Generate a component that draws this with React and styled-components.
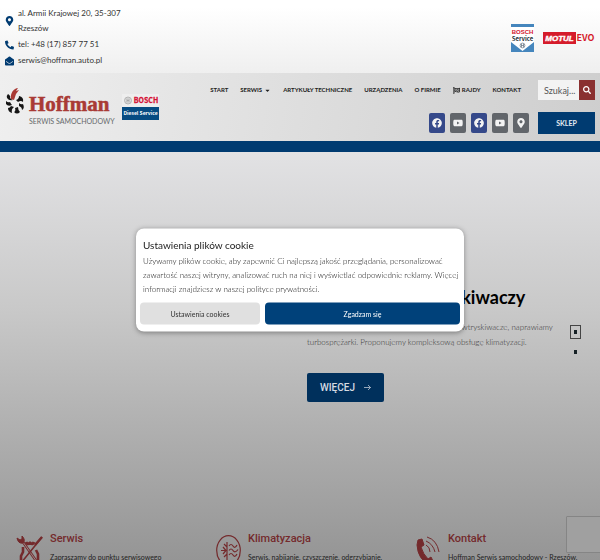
import React from "react";
import styled, { createGlobalStyle } from "styled-components";
import {
  FaMapMarkerAlt,
  FaPhoneAlt,
  FaEnvelopeOpen,
  FaFacebook,
  FaYoutube,
  FaSearch,
  FaCaretDown,
  FaFlagCheckered
} from "react-icons/fa";

const navy = "#003b71";
const red = "#8a3030";

const GlobalStyle = createGlobalStyle`
  * {
    box-sizing: border-box;
  }
  body {
    margin: 0;
    overflow: hidden;
    font-family: Lato, "Liberation Sans", sans-serif;
    color: #333;
  }
  a {
    color: inherit;
    text-decoration: none;
  }
  h1, h2, p, ul {
    margin: 0;
    padding: 0;
    list-style: none;
  }
  button {
    border: 0;
    padding: 0;
    font-family: inherit;
    cursor: pointer;
  }
`;

const Page = styled.div`
  display: flex;
  flex-direction: column;
  height: 100vh;
  overflow: hidden;
`;

const TopBar = styled.div`
  display: flex;
  justify-content: space-between;
  align-items: center;
  padding: 6px 5px 4px;
  background: linear-gradient(#ffffff 10%, #efefef);
`;

const ContactList = styled.ul`
  width: 124px;
  font-size: 8px;
  line-height: 15px;
`;

const ContactItem = styled.li`
  display: flex;
  align-items: center;
  gap: 4px;
  padding-bottom: 1px;

  svg {
    flex: none;
    width: 9px;
    height: 10px;
    color: ${navy};
  }
`;

const Partners = styled.div`
  display: flex;
  align-items: center;
  gap: 9px;
`;

const Header = styled.header`
  display: flex;
  justify-content: space-between;
  padding: 7px 5px 7px;
  background: linear-gradient(100deg, #efefef, #dedede 50%, #cecece);
  border-bottom: 11px solid ${navy};
`;

const Brand = styled.a`
  display: flex;
  align-items: center;
  gap: 5px;
`;

const Tools = styled.div`
  display: flex;
  flex-direction: column;
  justify-content: space-between;
  gap: 12px;
`;

const ToolRow = styled.div`
  display: flex;
  align-items: center;
  justify-content: flex-end;
  gap: 17px;
`;

const Nav = styled.nav`
  display: flex;
  gap: 12px;
`;

const NavLink = styled.a`
  display: flex;
  align-items: center;
  gap: 2px;
  font-size: 6px;
  font-weight: 700;
  line-height: 20px;
  color: #222;
  white-space: nowrap;

  svg {
    font-size: 7px;
  }
`;

const Search = styled.form`
  display: flex;
  width: 57px;
  height: 20px;
`;

const SearchInput = styled.input`
  flex: 1;
  min-width: 0;
  padding: 0 0 0 6px;
  border: 0;
  border-radius: 0;
  background: #f3f3f3;
  font-family: inherit;
  font-size: 9px;

  &::placeholder {
    color: #555;
  }
`;

const SearchButton = styled.button`
  display: grid;
  place-items: center;
  width: 16px;
  background: ${red};
  color: #fff;
  font-size: 8px;
`;

const Socials = styled.div`
  display: flex;
  gap: 5px;
  margin-right: -8px;
`;

const SocialLink = styled.a`
  display: grid;
  place-items: center;
  width: 16px;
  height: 20px;
  border-radius: 2px;
  background: ${({ $color }) => $color};
  color: #f3f3f3;
  font-size: 10px;
`;

const ShopLink = styled.a`
  width: 57px;
  background: ${navy};
  color: #e5ecf3;
  font-size: 7px;
  font-weight: 700;
  line-height: 22px;
  text-align: center;
`;

const Hero = styled.main`
  display: flex;
  flex: 1;
  flex-direction: column;
  min-height: 0;
  background: linear-gradient(#e2e2e4, #c9c9c9 38%, #b2b2b2 65%, #959595);
`;

const Slide = styled.section`
  display: flex;
  flex: none;
  justify-content: space-between;
  height: 378px;
  padding: 133px 19px 0 307px;
`;

const SlideTitle = styled.h1`
  font-size: 18px;
  font-weight: 700;
  line-height: 24px;
  color: #000;
  white-space: nowrap;
`;

const SlideText = styled.p`
  padding-top: 11px;
  font-size: 8px;
  font-weight: 300;
  line-height: 15px;
  color: #333;
  white-space: nowrap;
`;

const MoreLink = styled.a`
  display: flex;
  align-items: center;
  justify-content: center;
  gap: 9px;
  width: 77px;
  height: 29px;
  margin-top: 23px;
  border-radius: 2px;
  background: #00305c;
  color: #d5dbe2;
  font-family: Roboto, sans-serif;
  font-size: 10px;
  font-weight: 500;
`;

const Dots = styled.div`
  display: flex;
  flex-direction: column;
  gap: 6px;
  padding-top: 40px;
`;

const Dot = styled.button`
  display: grid;
  place-items: center;
  width: 11px;
  height: 14px;
  border: 1px solid ${({ $active }) => ($active ? "#444" : "transparent")};
  background: none;

  &::after {
    content: "";
    width: 3px;
    height: 4px;
    background: #162126;
  }
`;

const Features = styled.section`
  display: grid;
  grid-template-columns: repeat(3, 1fr);
  padding-left: 16px;
  margin-right: -16px;
`;

const Feature = styled.article`
  display: flex;
  gap: 7px;

  > svg {
    flex: none;
    margin-top: 5px;
  }
`;

const FeatureTitle = styled.h2`
  font-family: Roboto, sans-serif;
  font-size: 11px;
  font-weight: 500;
  line-height: 18px;
  color: #742a2c;
`;

const FeatureText = styled.p`
  padding-top: 4px;
  font-size: 7px;
  line-height: 10px;
  color: #222;
  white-space: nowrap;
`;

const CaptchaBadge = styled.div`
  position: fixed;
  right: -2px;
  bottom: 7px;
  width: 36px;
  height: 37px;
  border: 1px solid #858585;
  border-radius: 1px;
  background: #a0a0a0;
`;

const CookieDialog = styled.div`
  position: fixed;
  top: 50%;
  left: 50%;
  width: 328px;
  transform: translate(-50%, -50%);
  padding: 8px 4px 7px;
  border-radius: 8px;
  background: #fff;
  box-shadow: 0 1px 5px rgba(0, 0, 0, 0.35);
`;

const CookieTitle = styled.h2`
  padding: 0 3px;
  font-size: 10px;
  font-weight: 400;
  line-height: 16px;
  color: #222;
`;

const CookieText = styled.p`
  padding: 1px 0 7px 3px;
  font-size: 8px;
  font-weight: 300;
  line-height: 14px;
  color: #111;
`;

const CookieActions = styled.div`
  display: grid;
  grid-template-columns: 120px 1fr;
  gap: 5px;
`;

const CookieButton = styled.button`
  height: 22px;
  border-radius: 4px;
  background: ${({ $primary }) => ($primary ? "#00417a" : "#e0e0e0")};
  color: ${({ $primary }) => ($primary ? "#fff" : "#333")};
  font-size: 7px;
`;

function BoschServiceLogo() {
  return (
    <svg width="23" height="28" viewBox="0 0 23 28" role="img" aria-label="Bosch Service">
      <rect width="23" height="28" fill="#fff" />
      <rect width="23" height="3" fill="#4586bd" />
      <path d="M0 18 L11.5 27 L23 18 V28 H0Z" fill="#4586bd" />
      <text x="11.5" y="10" textAnchor="middle" fontFamily="Liberation Sans" fontWeight="700" fontSize="6" fill="#d3122b">BOSCH</text>
      <text x="11.5" y="17" textAnchor="middle" fontFamily="Noto Sans CJK SC" fontWeight="700" fontSize="6" fill="#29333b">Service</text>
      <circle cx="11.5" cy="21.5" r="2.4" fill="none" stroke="#456" strokeWidth="0.6" />
      <path d="M10.5 20v3M12.5 20v3M10.5 21.5h2" stroke="#456" strokeWidth="0.6" />
    </svg>
  );
}

function MotulLogo() {
  return (
    <svg width="52" height="12" viewBox="0 0 52 12" role="img" aria-label="Motul Evo">
      <rect width="33" height="12" fill="#d51c2b" />
      <text x="16.5" y="9" textAnchor="middle" fontFamily="Liberation Sans" fontStyle="italic" fontWeight="700" fontSize="8" fill="#fff" stroke="#fff" strokeWidth="0.4">MOTUL</text>
      <text x="42.5" y="9" textAnchor="middle" fontFamily="Noto Sans CJK SC" fontWeight="700" fontSize="9" fill="#d51c2b">EVO</text>
    </svg>
  );
}

function HoffmanLogo() {
  return (
    <svg width="112" height="40" viewBox="0 0 112 40" role="img" aria-label="Hoffman serwis samochodowy">
      <g fill="#151515">
        <path d="M3 7 Q6 9 5 11 Q7 13 8 13 Q4 14 2 11 Q1 9 3 7Z" />
        <path d="M1 14 Q3 16 5 15 Q6 17 7 18 Q3 20 1 17Z" />
        <path d="M3 21 Q5 21 6 19 L9 20 Q6 22 7 26 Q3 25 3 21Z" />
        <path d="M9 25 Q11 24 10 21 L13 20 Q13 23 15 25 Q12 28 9 25Z" />
        <path d="M17 23 Q17 20 14 19 L14 16 Q16 18 18 17 Q20 21 17 23Z" />
        <path d="M18 15 Q16 13 13 15 L11 13 Q14 12 14 9 Q19 10 18 15Z" />
      </g>
      <path d="M6 12 C5 6 9 1 13 1 L11 4 L14 3 L11 7 L9 13Z" fill="#a93a35" />
      <text x="24" y="24" fontFamily="Liberation Serif" fontWeight="700" fontSize="21" fill="#a93a35" stroke="#a93a35" strokeWidth="0.5">Hoffman</text>
      <text x="24" y="37" fontFamily="Lato" fontSize="7" fill="#66696b">SERWIS SAMOCHODOWY</text>
    </svg>
  );
}

function BoschDieselLogo() {
  return (
    <svg width="37" height="26" viewBox="0 0 37 26" role="img" aria-label="Bosch Diesel Service">
      <rect width="37" height="13" fill="#eeeeee" />
      <rect y="13" width="37" height="13" fill="#064b82" />
      <circle cx="6" cy="6.5" r="3.5" fill="#ddd" stroke="#aaa" strokeWidth="0.8" />
      <path d="M5 4.5v4M7 4.5v4M5 6.5h2" stroke="#999" strokeWidth="0.7" />
      <text x="24" y="9" textAnchor="middle" fontFamily="Noto Sans CJK SC" fontWeight="700" fontSize="7" fill="#d51235" stroke="#d51235" strokeWidth="0.3">BOSCH</text>
      <text x="18.5" y="21" textAnchor="middle" fontFamily="Noto Sans CJK SC" fontWeight="700" fontSize="5" fill="#fff">Diesel Service</text>
    </svg>
  );
}

function ToolsIcon() {
  return (
    <svg width="27" height="34" viewBox="0 0 27 34" fill="none" stroke="#742a2c" strokeWidth="1.6">
      <path d="M7 7 L23 30" strokeWidth="2.6" />
      <path d="M7 7 L23 30" stroke="#a0a0a0" strokeWidth="0.8" />
      <path d="M1 3 Q2 9 7 8 Q10 5 6 1 L6 4 L4 5Z" fill="#742a2c" strokeWidth="1" />
      <path d="M26 2 L18 12 L5 28" />
      <path d="M26 2 L19 10" strokeWidth="2.4" />
      <path d="M10 7 Q11 10 14 8 Q17 10 18 7" strokeWidth="3" />
      <path d="M7 12 V17 L5 21 V26 M20 15 L22 19 V26" strokeWidth="2.6" />
    </svg>
  );
}

function ClimateIcon() {
  return (
    <svg width="25" height="31" viewBox="0 0 25 31" fill="none" stroke="#742a2c" strokeWidth="1.2">
      <ellipse cx="12.5" cy="15.5" rx="11.8" ry="14.8" />
      <path d="M11 7V25M5 15.500H11M7 12L10 15.500L7 19M8 9L11 12M8 22L11 19" />
      <path d="M13 11q2-3 4 0t4-1M13 15.500q2-3 4 0t5-1M13 20q2-3 4 0t4-1" />
    </svg>
  );
}

function CallIcon() {
  return (
    <svg width="25" height="30" viewBox="0 0 25 30" fill="none" stroke="#742a2c" strokeWidth="1">
      <path d="M2 5 L6 4 L8 10 L5 12 Q7 19 12 24 L15 22 L18 28 L14 30 Q2 25 1 10Z" fill="#742a2c" />
      <path d="M11 2 Q21 5 23 17M10 6 Q17 9 19 17M10 10 Q14 12 14 17" />
    </svg>
  );
}

const socials = [
  { name: "Facebook", color: "#35498a", Icon: FaFacebook },
  { name: "YouTube", color: "#62666b", Icon: FaYoutube },
  { name: "Facebook serwis", color: "#35498a", Icon: FaFacebook },
  { name: "YouTube serwis", color: "#62666b", Icon: FaYoutube },
  { name: "Mapa", color: "#62666b", Icon: FaMapMarkerAlt }
];

const features = [
  { title: "Serwis", text: "Zapraszamy do punktu serwisowego", Icon: ToolsIcon },
  { title: "Klimatyzacja", text: "Serwis, nabijanie, czyszczenie, odgrzybianie,", Icon: ClimateIcon },
  { title: "Kontakt", text: "Hoffman Serwis samochodowy - Rzeszów,", Icon: CallIcon }
];

export default function App() {
  return (
    <Page>
      <GlobalStyle />
      <TopBar>
        <ContactList>
          <ContactItem>
            <FaMapMarkerAlt />
            <span>al. Armii Krajowej 20, 35-307 Rzeszów</span>
          </ContactItem>
          <ContactItem>
            <FaPhoneAlt />
            <a href="tel:+48178577751">tel: +48 (17) 857 77 51</a>
          </ContactItem>
          <ContactItem>
            <FaEnvelopeOpen />
            <a href="mailto:serwis@hoffman.auto.pl">serwis@hoffman.auto.pl</a>
          </ContactItem>
        </ContactList>
        <Partners>
          <BoschServiceLogo />
          <MotulLogo />
        </Partners>
      </TopBar>

      <Header>
        <Brand href="#">
          <HoffmanLogo />
          <BoschDieselLogo />
        </Brand>
        <Tools>
          <ToolRow>
            <Nav>
              <NavLink href="#">START</NavLink>
              <NavLink href="#">
                SERWIS <FaCaretDown />
              </NavLink>
              <NavLink href="#">ARTYKUŁY TECHNICZNE</NavLink>
              <NavLink href="#">URZĄDZENIA</NavLink>
              <NavLink href="#">O FIRMIE</NavLink>
              <NavLink href="#">
                <FaFlagCheckered /> RAJDY
              </NavLink>
              <NavLink href="#">KONTAKT</NavLink>
            </Nav>
            <Search>
              <SearchInput placeholder="Szukaj..." aria-label="Szukaj" />
              <SearchButton type="submit" aria-label="Szukaj">
                <FaSearch />
              </SearchButton>
            </Search>
          </ToolRow>
          <ToolRow>
            <Socials>
              {socials.map(({ name, color, Icon }) => (
                <SocialLink key={name} href="#" aria-label={name} $color={color}>
                  <Icon />
                </SocialLink>
              ))}
            </Socials>
            <ShopLink href="#">SKLEP</ShopLink>
          </ToolRow>
        </Tools>
      </Header>

      <Hero>
        <Slide>
          <div>
            <SlideTitle>Kalibrowanie wtryskiwaczy</SlideTitle>
            <SlideText>
              Regenerujemy pompowtryskiwacze, pompy i wtryskiwacze, naprawiamy
              <br />
              turbosprężarki. Proponujemy kompleksową obsługę klimatyzacji.
            </SlideText>
            <MoreLink href="#">
              WIĘCEJ
              <svg width="7" height="7" viewBox="0 0 7 7" fill="none" stroke="currentColor" strokeWidth="0.7">
                <path d="M0 3.500H6.500M4 1L6.500 3.500L4 6" />
              </svg>
            </MoreLink>
          </div>
          <Dots>
            <Dot $active aria-label="Slajd 1" />
            <Dot aria-label="Slajd 2" />
          </Dots>
        </Slide>
        <Features>
          {features.map(({ title, text, Icon }) => (
            <Feature key={title}>
              <Icon />
              <div>
                <FeatureTitle>{title}</FeatureTitle>
                <FeatureText>{text}</FeatureText>
              </div>
            </Feature>
          ))}
        </Features>
      </Hero>

      <CaptchaBadge />

      <CookieDialog role="dialog" aria-labelledby="cookie-title">
        <CookieTitle id="cookie-title">Ustawienia plików cookie</CookieTitle>
        <CookieText>
          Używamy plików cookie, aby zapewnić Ci najlepszą jakość przeglądania, personalizować
          zawartość naszej witryny, analizować ruch na niej i wyświetlać odpowiednie reklamy. Więcej
          informacji znajdziesz w naszej polityce prywatności.
        </CookieText>
        <CookieActions>
          <CookieButton>Ustawienia cookies</CookieButton>
          <CookieButton $primary>Zgadzam się</CookieButton>
        </CookieActions>
      </CookieDialog>
    </Page>
  );
}
